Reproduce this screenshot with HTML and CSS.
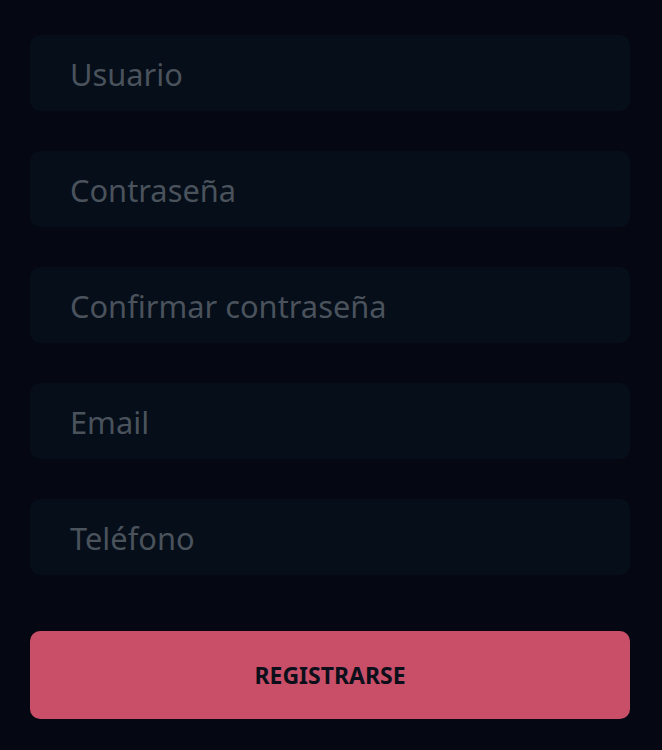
FILE: index.html
```html
<!DOCTYPE html>
<html lang="es">
<head>
<meta charset="utf-8">
<title>Registro</title>
<link rel="stylesheet" href="styles.css">
</head>
<body>
<form class="form">
  <input class="field" type="text" placeholder="Usuario">
  <input class="field" type="password" placeholder="Contraseña">
  <input class="field" type="password" placeholder="Confirmar contraseña">
  <input class="field" type="email" placeholder="Email">
  <input class="field" type="tel" placeholder="Teléfono">
  <button class="submit" type="button">REGISTRARSE</button>
</form>
</body>
</html>
```

FILE: styles.css
```css
html, body {
  margin: 0;
  padding: 0;
  background: #050812;
  height: 100%;
}
body {
  font-family: "Noto Sans", "Open Sans", sans-serif;
}
.form {
  display: flex;
  flex-direction: column;
  gap: 40px;
  padding: 35px 32px 0 30px;
}
.field {
  box-sizing: border-box;
  height: 76px;
  width: 100%;
  border: none;
  outline: none;
  border-radius: 10px;
  background: #050e19;
  padding: 2px 40px 0;
  font-family: inherit;
  font-size: 30.8px;
  color: #cfd4da;
}
.field::placeholder {
  color: #4a525c;
  opacity: 1;
}
.submit {
  margin-top: 16px;
  height: 88px;
  border: none;
  border-radius: 10px;
  background: #c94f69;
  color: #0b0f1a;
  font-family: inherit;
  font-weight: 700;
  font-size: 23px;
  letter-spacing: 0;
}
```
